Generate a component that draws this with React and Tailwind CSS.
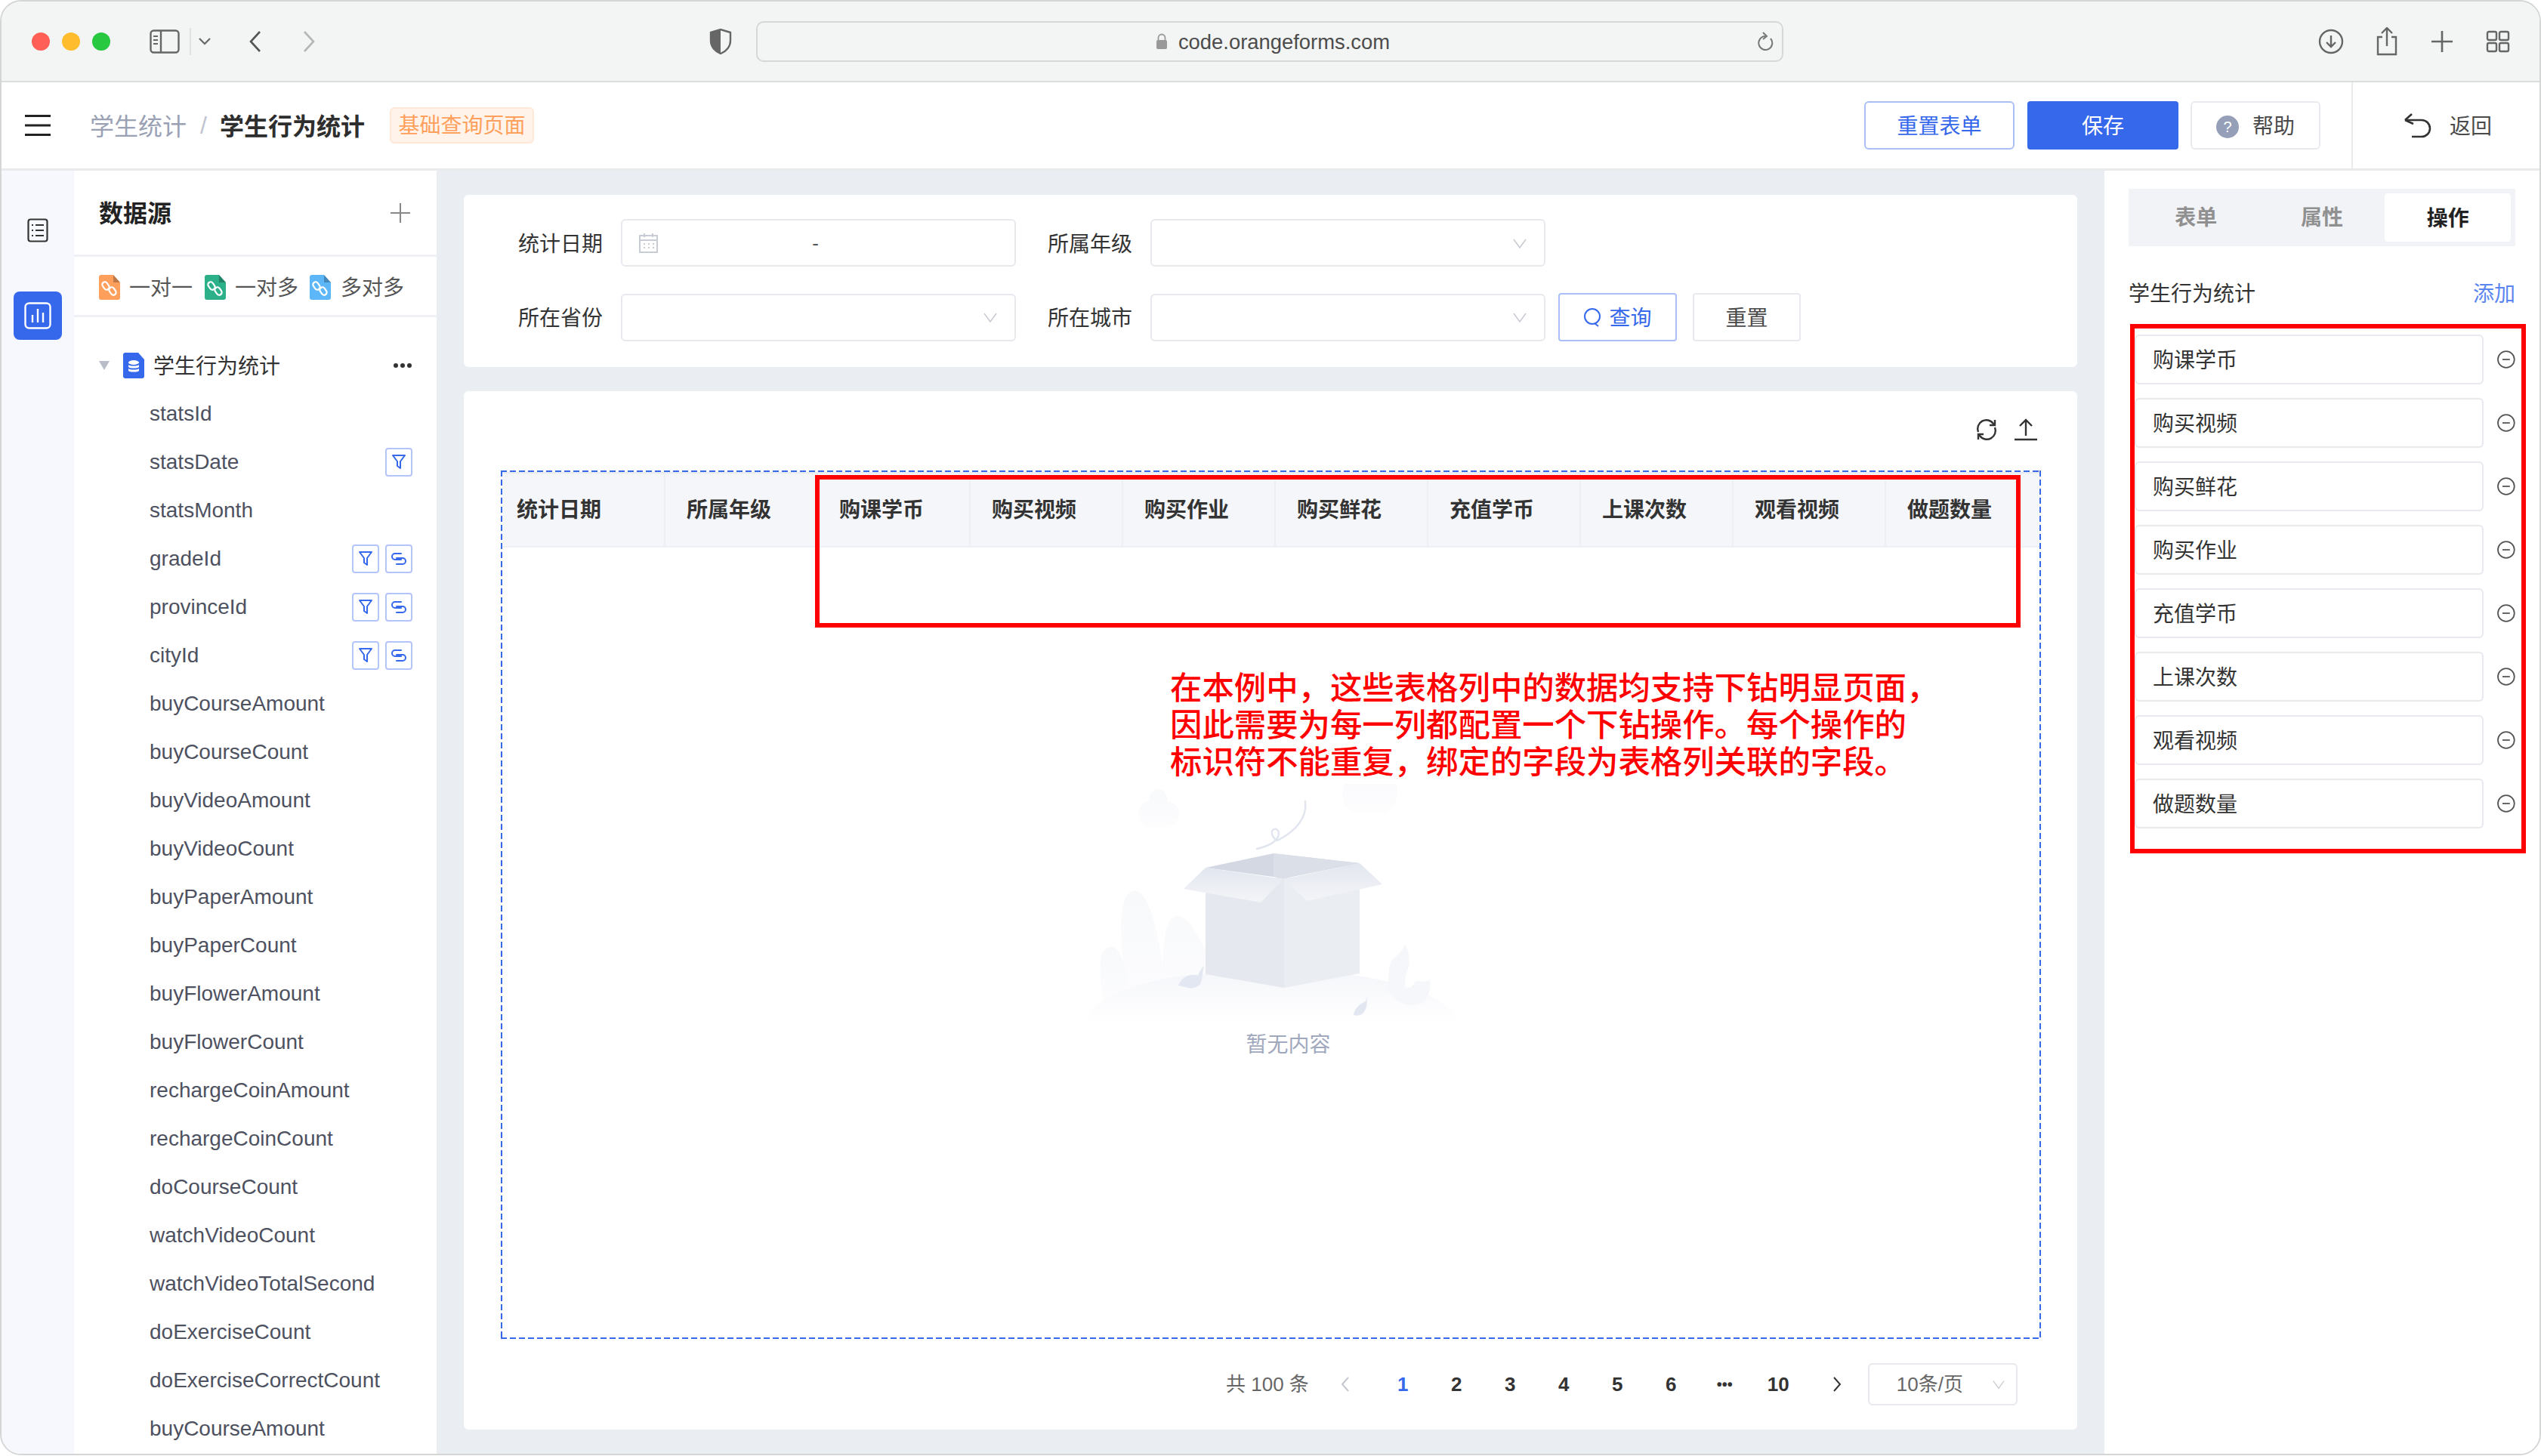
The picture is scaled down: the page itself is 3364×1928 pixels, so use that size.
import React from 'react'

const FIELDS = [
    { name: 'statsId' },
    { name: 'statsDate', filter: true },
    { name: 'statsMonth' },
    { name: 'gradeId', filter: true, link: true },
    { name: 'provinceId', filter: true, link: true },
    { name: 'cityId', filter: true, link: true },
    { name: 'buyCourseAmount' },
    { name: 'buyCourseCount' },
    { name: 'buyVideoAmount' },
    { name: 'buyVideoCount' },
    { name: 'buyPaperAmount' },
    { name: 'buyPaperCount' },
    { name: 'buyFlowerAmount' },
    { name: 'buyFlowerCount' },
    { name: 'rechargeCoinAmount' },
    { name: 'rechargeCoinCount' },
    { name: 'doCourseCount' },
    { name: 'watchVideoCount' },
    { name: 'watchVideoTotalSecond' },
    { name: 'doExerciseCount' },
    { name: 'doExerciseCorrectCount' },
    { name: 'buyCourseAmount' },
]
const COLUMNS = ['购课学币', '购买视频', '购买作业', '购买鲜花', '充值学币', '上课次数', '观看视频', '做题数量']
const OPERATIONS = ['购课学币', '购买视频', '购买鲜花', '购买作业', '充值学币', '上课次数', '观看视频', '做题数量']
const PAGES = ['2', '3', '4', '5', '6']

const Chevron = ({ className }) => (
    <svg className={className} viewBox="0 0 20 20" fill="none" stroke="#c5c8d0" strokeWidth="1.4"><path d="M2 5l8 11 8-11" /></svg>
)

function FileIcon({ color, children }) {
    return (
        <svg className="w-[28px] h-[33px] shrink-0" viewBox="0 0 28 33">
            <path d="M3 0h16l9 10v20a3 3 0 0 1-3 3H3a3 3 0 0 1-3-3V3a3 3 0 0 1 3-3z" fill={color} />
            <path d="M19 0l9 10h-9z" fill="#000" opacity="0.25" />
            {children}
        </svg>
    )
}

const LinkMark = () => (
    <g fill="none" stroke="#fff" strokeWidth="2.2">
        <rect x="5.5" y="9" width="7" height="11" rx="3.5" transform="rotate(-35 9 14.5)" />
        <rect x="14.5" y="16" width="7" height="11" rx="3.5" transform="rotate(-35 18 21.5)" />
    </g>
)

function InputBox({ children, className }) {
    return <div className={"h-[63px] w-[523px] shrink-0 border-2 border-[#e8e9ee] rounded-[6px] flex items-center " + (className || '')}>{children}</div>
}

function SelectBox() {
    return (
        <InputBox className="justify-end pr-[22px]">
            <Chevron className="w-[20px] h-[20px]" />
        </InputBox>
    )
}

function Label({ children }) {
    return <span className="block w-[112px] shrink-0 pt-[4px] text-[28px] text-[#333] leading-none">{children}</span>
}

function Tag({ children }) {
    return <div className="w-[36px] h-[38px] border-2 border-[#b3c5f9] rounded-[4px] flex items-center justify-center">{children}</div>
}

const FunnelIcon = () => (
    <svg className="w-[20px] h-[22px]" viewBox="0 0 20 22" fill="none" stroke="#3668ec" strokeWidth="2" strokeLinejoin="round"><path d="M2 2h16l-6 8v9l-4-3v-6z" /></svg>
)
const LinkIcon = () => (
    <svg className="w-[22px] h-[18px]" viewBox="0 0 22 18" fill="none" stroke="#3668ec" strokeWidth="2" strokeLinecap="round">
        <path d="M14 2H6a3.5 3.5 0 0 0 0 8h8" />
        <path d="M8 8h8a3.5 3.5 0 0 1 0 8H8" />
    </svg>
)

function EmptyBox() {
    return (
        <svg className="w-[520px] h-[330px]" viewBox="1422 1040 520 330">
            <defs>
                <linearGradient id="hill" x1="0" y1="0" x2="0" y2="1"><stop offset="0" stopColor="#f5f6fa" /><stop offset="1" stopColor="#fff" /></linearGradient>
                <linearGradient id="flap" x1="0" y1="0" x2="0" y2="1"><stop offset="0" stopColor="#e2e6ef" /><stop offset="1" stopColor="#f4f5f8" /></linearGradient>
                <linearGradient id="plant" x1="0" y1="0" x2="0" y2="1"><stop offset="0" stopColor="#f8f9fb" /><stop offset="1" stopColor="#fdfdfe" /></linearGradient>
            </defs>
            <path d="M1532 1047c8 0 13 7 13 17 9 0 15 7 15 15 0 9-6 17-14 19h-27c-8-2-13-10-13-19 0-8 5-15 14-16 0-9 5-16 12-16z" fill="url(#plant)" />
            <path d="M1816 1015c8 0 12 6 12 14 0 3 0 4 0 4 14-3 21 7 21 17 0 14-8 25-18 28h-38c-11-3-17-13-17-26 0-11 7-20 17-21 3-9 12-16 23-16z" fill="url(#plant)" />
            <path d="M1495 1330c-8-40-15-90-10-125 3-22 16-29 26-18 12 14 22 50 27 95 2-45 6-65 18-67 14-2 26 20 39 45v100z" fill="url(#plant)" />
            <path d="M1463 1350c-7-35-10-70-5-85 6-14 18-12 25 2 8 15 10 40 12 60z" fill="url(#plant)" />
            <path d="M1434 1357c6-35 90-67 200-68h100c90 2 190 30 194 68z" fill="url(#hill)" />
            <path d="M1835 1310c5-16 0-28 8-38 5-6 12-8 16-20 6 12 8 24 3 36-3 8-3 16-3 24 6-2 10-3 12-8 3-5 8-3 13-2 4-1 6-1 8-3 2 10-1 22-9 30-14 8-35 5-48-19z" fill="#f6f7fa" />
            <path d="M1595 1184l104-22v148l-104-18z" fill="#e5e8ee" />
            <path d="M1699 1162l100 18v111l-100 19z" fill="#eaedf2" />
            <path d="M1595 1151l90-19 114 13-100 20z" fill="#d3d8e2" />
            <path d="M1685 1132l114 13-100 20-14-3z" fill="#dbdfe7" />
            <path d="M1595 1151l103 15-30 31-102-18z" fill="url(#flap)" />
            <path d="M1799 1145l30 28-100 22-30-29z" fill="url(#flap)" />
            <path d="M1727 1063c3 22-13 40-37 52-6-3-9-10-6-14 4-3 8 0 8 5-1 9-12 16-29 20" fill="none" stroke="#e1e5ee" strokeWidth="2.4" strokeLinecap="round" />
            <path d="M1559 1307c3-8 10-14 20-14 4 0 6 1 6 1 3-8 6-11 8-13-3 12-2 18-5 24-4 5-11 7-20 4z" fill="#e3e7f1" />
            <path d="M1791 1346c1-8 7-14 14-17 4-2 2-4 3-7 2 8 0 18-6 23-3 2-7 2-11 1z" fill="#e3e7f1" />
        </svg>
    )
}

export default function App() {
    return (
        <div className="relative w-[3364px] h-[1928px] overflow-hidden bg-white font-['Liberation_Sans','Noto_Sans_CJK_SC',sans-serif]">
            <div className="w-full h-[1927px] flex flex-col overflow-hidden rounded-[28px] border-2 border-[#d4d6d6]">
                {/* browser bar */}
                <div className="h-[107px] shrink-0 bg-[#f3f5f4] border-b-2 border-[#dcdedd] flex items-center pl-[40px]">
                    <div className="w-[24px] h-[24px] rounded-full bg-[#ff5f57]" />
                    <div className="w-[24px] h-[24px] rounded-full bg-[#ffbd2e] ml-[16px]" />
                    <div className="w-[24px] h-[24px] rounded-full bg-[#28c840] ml-[16px]" />
                    <svg className="w-[40px] h-[32px] ml-[52px]" viewBox="0 0 40 32" fill="none" stroke="#666" strokeWidth="2.4">
                        <rect x="1.5" y="1.5" width="37" height="29" rx="4" />
                        <path d="M15 1.5v29" />
                        <path d="M5 9h6M5 14h6M5 19h6" strokeWidth="2" />
                    </svg>
                    <div className="w-[2px] h-[36px] bg-[#dfe1e0] ml-[13px]" />
                    <svg className="w-[16px] h-[10px] ml-[10px]" viewBox="0 0 16 10" fill="none" stroke="#666" strokeWidth="2.2"><path d="M1 1l7 7 7-7" /></svg>
                    <svg className="w-[18px] h-[30px] ml-[50px]" viewBox="0 0 18 30" fill="none" stroke="#555" strokeWidth="2.6"><path d="M15 2L3 15l12 13" /></svg>
                    <svg className="w-[18px] h-[30px] ml-[53px]" viewBox="0 0 18 30" fill="none" stroke="#b5b7b7" strokeWidth="2.6"><path d="M3 2l12 13L3 28" /></svg>
                    <svg className="w-[30px] h-[34px] ml-[521px]" viewBox="0 0 30 34">
                        <path d="M15 1l13 4v11c0 8-6 14-13 17-7-3-13-9-13-17V5z" fill="none" stroke="#666" strokeWidth="2.4" />
                        <path d="M15 1v32C8 30 2 24 2 16V5z" fill="#666" />
                    </svg>
                    <div className="w-[1360px] h-[54px] ml-[32px] rounded-[10px] border-2 border-[#d6d8d7] pl-[8px] flex items-center justify-center relative">
                        <svg className="w-[16px] h-[22px] mr-[14px]" viewBox="0 0 16 22"><path d="M3.5 9V6a4.5 4.5 0 0 1 9 0v3" fill="none" stroke="#999" strokeWidth="1.8" /><rect x="1" y="9" width="14" height="12" rx="2" fill="#999" /></svg>
                        <span className="pt-[3px] text-[27.4px] text-[#4c4c4c] leading-none">code.orangeforms.com</span>
                        <svg className="absolute right-[10px] w-[24px] h-[26px]" viewBox="0 0 24 26" fill="none" stroke="#777" strokeWidth="2"><path d="M19 9a9 9 0 1 1-7-3" /><path d="M9 1l5 5-5 4" /></svg>
                    </div>
                    <svg className="w-[34px] h-[34px] ml-[708px]" viewBox="0 0 34 34" fill="none" stroke="#666" strokeWidth="2.4"><circle cx="17" cy="17" r="15" /><path d="M17 9v15M11 18l6 6 6-6" /></svg>
                    <svg className="w-[30px] h-[38px] ml-[42px]" viewBox="0 0 30 38" fill="none" stroke="#666" strokeWidth="2.4"><path d="M9 13H3v23h24V13h-6" /><path d="M15 25V2M8 8l7-7 7 7" /></svg>
                    <svg className="w-[28px] h-[28px] ml-[44px]" viewBox="0 0 28 28" fill="none" stroke="#666" strokeWidth="2.6"><path d="M14 0v28M0 14h28" /></svg>
                    <svg className="w-[32px] h-[30px] ml-[44px]" viewBox="0 0 32 30" fill="none" stroke="#666" strokeWidth="2.4"><rect x="2" y="2" width="12" height="11" rx="2" /><rect x="18" y="2" width="12" height="11" rx="2" /><rect x="2" y="17" width="12" height="11" rx="2" /><rect x="18" y="17" width="12" height="11" rx="2" /></svg>
                </div>

                {/* app header */}
                <div className="h-[117px] shrink-0 bg-white border-b-[3px] border-[#e9eaec] flex items-center pl-[31px]">
                    <svg className="w-[34px] h-[28px]" viewBox="0 0 34 28" fill="#222"><rect width="34" height="3" /><rect y="12.5" width="34" height="3" /><rect y="25" width="34" height="3" /></svg>
                    <span className="ml-[52px] pt-[3px] text-[32px] text-[#9aa1b4] leading-none">学生统计</span>
                    <span className="ml-[18px] text-[32px] text-[#c0c4d0] leading-none">/</span>
                    <span className="ml-[17px] pt-[3px] text-[32px] font-semibold text-[#2e2e2e] leading-none">学生行为统计</span>
                    <div className="ml-[33px] w-[191px] h-[48px] rounded-[6px] bg-[#fff3ea] border-2 border-[#ffe8d8] flex items-center justify-center pt-[2px] text-[28px] text-[#ff9f5c] leading-none">基础查询页面</div>
                    <div className="ml-auto h-full flex items-center">
                        <button className="w-[199px] h-[64px] rounded-[6px] border-2 border-[#a9bff6] pt-[3px] text-[28px] text-[#3668ec] bg-white">重置表单</button>
                        <button className="w-[200px] h-[64px] rounded-[4px] ml-[17px] pt-[3px] text-[28px] text-white bg-[#3668ec]">保存</button>
                        <button className="w-[172px] h-[64px] rounded-[6px] ml-[16px] border-2 border-[#e8eaee] pt-[3px] text-[28px] text-[#4a4a4a] bg-white flex items-center justify-center gap-[18px]">
                            <span className="w-[30px] h-[30px] rounded-full bg-[#969fb8] text-white text-[20px] flex items-center justify-center">?</span>
                            帮助
                        </button>
                        <div className="w-[2px] h-full bg-[#e9eaec] ml-[41px]" />
                        <div className="w-[247px] flex items-center pl-[66px] gap-[22px]">
                            <svg className="w-[40px] h-[34px]" viewBox="0 0 40 34" fill="none" stroke="#333" strokeWidth="2.6" strokeLinejoin="round"><path d="M3 10l9-8M3 10l11 5" /><path d="M3 10h22a11 11 0 0 1 0 22H12" /></svg>
                            <span className="pt-[3px] text-[28px] text-[#4a4a4a] leading-none">返回</span>
                        </div>
                    </div>
                </div>

                <div className="flex-1 flex min-h-0">
                    {/* left rail */}
                    <div className="w-[96px] shrink-0 bg-[#f6f8fd] flex flex-col items-center pt-[63px]">
                        <svg className="w-[28px] h-[32px]" viewBox="0 0 28 32" fill="none" stroke="#333" strokeWidth="2.2">
                            <rect x="1.5" y="1.5" width="25" height="29" rx="3" />
                            <path d="M6 9h2M11 9h11M6 16h2M11 16h11M6 23h2M11 23h11" />
                        </svg>
                        <div className="w-[64px] h-[64px] mt-[65px] rounded-[8px] bg-[#3668ec] flex items-center justify-center">
                            <svg className="w-[36px] h-[36px]" viewBox="0 0 36 36" fill="none" stroke="#fff" strokeWidth="2.4">
                                <rect x="1.5" y="1.5" width="33" height="33" rx="5" />
                                <path d="M11 17v10M18 9v18M25 14v13" />
                            </svg>
                        </div>
                    </div>

                    {/* data source panel */}
                    <div className="w-[480px] shrink-0 bg-white flex flex-col">
                        <div className="h-[114px] shrink-0 border-b-[3px] border-[#f0f1f6] flex items-center justify-between pl-[33px] pr-[35px]">
                            <span className="pt-[3px] text-[32px] font-bold text-[#222] leading-none">数据源</span>
                            <svg className="w-[26px] h-[26px]" viewBox="0 0 26 26" stroke="#888" strokeWidth="2"><path d="M13 0v26M0 13h26" /></svg>
                        </div>
                        <div className="h-[80px] shrink-0 border-b-[3px] border-[#f0f1f6] pt-[3px] flex items-center pl-[33px] text-[28px] text-[#555] leading-none">
                            <FileIcon color="#ff9f5c"><LinkMark /></FileIcon>
                            <span className="ml-[12px] pt-[3px]">一对一</span>
                            <span className="ml-[16px]"><FileIcon color="#2bb08a"><LinkMark /></FileIcon></span>
                            <span className="ml-[12px] pt-[3px]">一对多</span>
                            <span className="ml-[15px]"><FileIcon color="#5cb6f8"><LinkMark /></FileIcon></span>
                            <span className="ml-[13px] pt-[3px]">多对多</span>
                        </div>
                        <div className="flex-1 min-h-0 overflow-hidden pt-[32px]">
                            <div className="h-[64px] flex items-center pl-[33px] pr-[33px]">
                                <svg className="w-[14px] h-[12px]" viewBox="0 0 14 12" fill="#b9bdc8"><path d="M0 0h14L7 12z" /></svg>
                                <svg className="w-[28px] h-[34px] ml-[18px]" viewBox="0 0 28 34">
                                    <path d="M3 0h17l8 9v22a3 3 0 0 1-3 3H3a3 3 0 0 1-3-3V3a3 3 0 0 1 3-3z" fill="#3668ec" />
                                    <ellipse cx="14" cy="13" rx="7" ry="3" fill="#fff" />
                                    <path d="M7 16c2 2 12 2 14 0v3c-2 2-12 2-14 0zM7 21c2 2 12 2 14 0v3c-2 2-12 2-14 0z" fill="#fff" />
                                </svg>
                                <span className="ml-[12px] pt-[3px] text-[28px] text-[#333] leading-none">学生行为统计</span>
                                <span className="ml-auto flex gap-[3px]">
                                    <i className="w-[6px] h-[6px] rounded-full bg-[#333]" />
                                    <i className="w-[6px] h-[6px] rounded-full bg-[#333]" />
                                    <i className="w-[6px] h-[6px] rounded-full bg-[#333]" />
                                </span>
                            </div>
                            {FIELDS.map((f, i) => (
                                <div key={i} className="h-[64px] flex items-center pl-[100px] pr-[32px] text-[28px] text-[#4d5160] leading-none">
                                    <span>{f.name}</span>
                                    <span className="ml-auto flex gap-[8px]">
                                        {f.filter && <Tag><FunnelIcon /></Tag>}
                                        {f.link && <Tag><LinkIcon /></Tag>}
                                    </span>
                                </div>
                            ))}
                        </div>
                    </div>

                    {/* centre */}
                    <div className="flex-1 min-w-0 bg-[#eaedf1] flex flex-col gap-[32px] px-[36px] pt-[32px] pb-[32px]">
                        <div className="h-[228px] shrink-0 bg-white rounded-[6px] pl-[72px] pt-[32px] flex flex-col gap-[35px]">
                            <div className="flex items-center">
                                <Label>统计日期</Label>
                                <InputBox className="ml-[24px] relative justify-center pr-[8px]">
                                    <svg className="absolute left-[22px] w-[25px] h-[26px]" viewBox="0 0 25 26" fill="none" stroke="#c8ccd4" strokeWidth="2"><rect x="1" y="3" width="23" height="22" /><path d="M1 9h23M7 0v5M18 0v5M6 14h2M12 14h2M18 14h2M6 19h2M12 19h2M18 19h2" /></svg>
                                    <span className="text-[26px] text-[#555] leading-none">-</span>
                                </InputBox>
                                <div className="ml-[42px]"><Label>所属年级</Label></div>
                                <div className="ml-[24px]"><SelectBox /></div>
                            </div>
                            <div className="flex items-center">
                                <Label>所在省份</Label>
                                <div className="ml-[24px]"><SelectBox /></div>
                                <div className="ml-[42px]"><Label>所在城市</Label></div>
                                <div className="ml-[24px]"><SelectBox /></div>
                                <button className="ml-[17px] w-[157px] h-[64px] rounded-[4px] border-2 border-[#a9bff6] text-[28px] text-[#3668ec] flex items-center justify-center gap-[10px]">
                                    <svg className="w-[24px] h-[26px]" viewBox="0 0 24 26" fill="none" stroke="#3668ec" strokeWidth="2"><circle cx="12" cy="12" r="10" /><path d="M15 21l5 4" /></svg>
                                    <span className="pt-[3px]">查询</span>
                                </button>
                                <button className="ml-[21px] w-[143px] h-[64px] rounded-[4px] border-2 border-[#e8e9ee] pt-[3px] text-[28px] text-[#4a4a4a]">重置</button>
                            </div>
                        </div>

                        <div className="flex-1 min-h-0 bg-white rounded-[6px] pl-[49px] pr-[48px] flex flex-col">
                            <div className="h-[105px] shrink-0 flex justify-end items-start gap-[22px] pt-[36px] pr-[5px]">
                                <svg className="w-[30px] h-[30px]" viewBox="0 0 30 30" fill="none" stroke="#333" strokeWidth="2.4"><path d="M4 18A11.5 11.5 0 0 1 24 7l2 2M26 12A11.5 11.5 0 0 1 6 23l-2-2" /><path d="M26 2v7h-7M4 28v-7h7" /></svg>
                                <svg className="w-[30px] h-[30px]" viewBox="0 0 30 30" fill="none" stroke="#333" strokeWidth="2.4"><path d="M15 23V2M7 10l8-8 8 8M0 28h30" /></svg>
                            </div>
                            <div className="h-[1150px] shrink-0 p-[2px] flex flex-col [background:linear-gradient(90deg,#3668ec_8px,transparent_8px)_0_0/12px_2px_repeat-x,linear-gradient(90deg,#3668ec_8px,transparent_8px)_0_100%/12px_2px_repeat-x,linear-gradient(180deg,#3668ec_8px,transparent_8px)_0_0/2px_12px_repeat-y,linear-gradient(180deg,#3668ec_8px,transparent_8px)_100%_0/2px_12px_repeat-y]">
                                <div className="h-[100px] shrink-0 flex bg-[#f5f6f9] border-t-2 border-t-[#e8eaee] border-b-2 border-b-[#eef0f5] text-[28px] font-semibold text-[#333] leading-none">
                                    <div className="w-[216px] flex items-center pl-[19px] pt-[2px] border-r-2 border-[#eeeff3]">统计日期</div>
                                    <div className="w-[202px] flex items-center pl-[28px] pt-[2px] border-r-2 border-[#eeeff3]">所属年级</div>
                                    {COLUMNS.map((c) => (
                                        <div key={c} className="w-[202px] flex items-center pl-[28px] pt-[2px] border-r-2 border-[#eeeff3] last:border-r-0">{c}</div>
                                    ))}
                                </div>
                                <div className="flex-1 flex flex-col items-center pt-[313px]">
                                    <EmptyBox />
                                    <span className="text-[28px] text-[#a0a8bd] leading-none mt-[2px] ml-[46px]">暂无内容</span>
                                </div>
                            </div>
                            <div className="flex-1 flex items-center text-[26px] text-[#666] leading-none pl-[960px]">
                                <span>共 100 条</span>
                                <svg className="w-[12px] h-[20px] ml-[42px]" viewBox="0 0 12 20" fill="none" stroke="#c5c8d0" strokeWidth="2"><path d="M10 1L2 10l8 9" /></svg>
                                <span className="w-[71px] ml-[35px] font-bold text-[#3668ec] text-center">1</span>
                                {PAGES.map((p) => (
                                    <span key={p} className="w-[71px] font-bold text-[#333] text-center">{p}</span>
                                ))}
                                <span className="w-[71px] text-[20px] font-bold text-[#333] text-center">•••</span>
                                <span className="w-[71px] font-bold text-[#333] text-center">10</span>
                                <svg className="w-[12px] h-[20px] ml-[36px]" viewBox="0 0 12 20" fill="none" stroke="#333" strokeWidth="2"><path d="M2 1l8 9-8 9" /></svg>
                                <div className="w-[198px] h-[56px] ml-[35px] rounded-[6px] border-2 border-[#e8e9ee] flex items-center pl-[36px] pr-[14px] justify-between text-[#666]">
                                    <span>10条/页</span>
                                    <Chevron className="w-[18px] h-[18px]" />
                                </div>
                            </div>
                        </div>
                    </div>

                    {/* right panel */}
                    <div className="w-[576px] shrink-0 bg-white px-[32px] pt-[24px]">
                        <div className="h-[76px] bg-[#f2f3f7] flex items-center px-[6px] text-[28px] font-bold text-[#909090] leading-none">
                            <div className="flex-1 text-center pt-[2px]">表单</div>
                            <div className="flex-1 text-center pt-[2px]">属性</div>
                            <div className="flex-1 h-[64px] rounded-[4px] bg-white pt-[3px] text-[#222] flex items-center justify-center">操作</div>
                        </div>
                        <div className="flex items-center justify-between mt-[50px] text-[28px] leading-none">
                            <span className="text-[#333]">学生行为统计</span>
                            <span className="text-[#5b85f0]">添加</span>
                        </div>
                        <div className="mt-[39px] flex flex-col gap-[18px]">
                            {OPERATIONS.map((op) => (
                                <div key={op} className="flex items-center">
                                    <div className="w-[467px] h-[66px] ml-[8px] rounded-[6px] border-2 border-[#e8e9ee] flex items-center pl-[22px] pt-[3px] text-[28px] text-[#333] leading-none">{op}</div>
                                    <svg className="w-[24px] h-[24px] ml-[18px]" viewBox="0 0 24 24" fill="none" stroke="#555" strokeWidth="1.8"><circle cx="12" cy="12" r="11" /><path d="M7 12h10" /></svg>
                                </div>
                            ))}
                        </div>
                    </div>
                </div>
            </div>

            {/* red annotations drawn on top of the screenshot */}
            <div className="absolute left-[1079px] top-[629px] w-[1596px] h-[202px] border-[6px] border-[#ff0000]" />
            <div className="absolute left-[2820px] top-[429px] w-[524px] h-[701px] border-[6px] border-[#ff0000]" />
            <div className="absolute left-[1549px] top-[887px] text-[42.4px] font-medium leading-[49px] text-[#ff0000] whitespace-nowrap">
                <div>在本例中，这些表格列中的数据均支持下钻明显页面，</div>
                <div>因此需要为每一列都配置一个下钻操作。每个操作的</div>
                <div>标识符不能重复，绑定的字段为表格列关联的字段。</div>
            </div>
        </div>
    )
}
